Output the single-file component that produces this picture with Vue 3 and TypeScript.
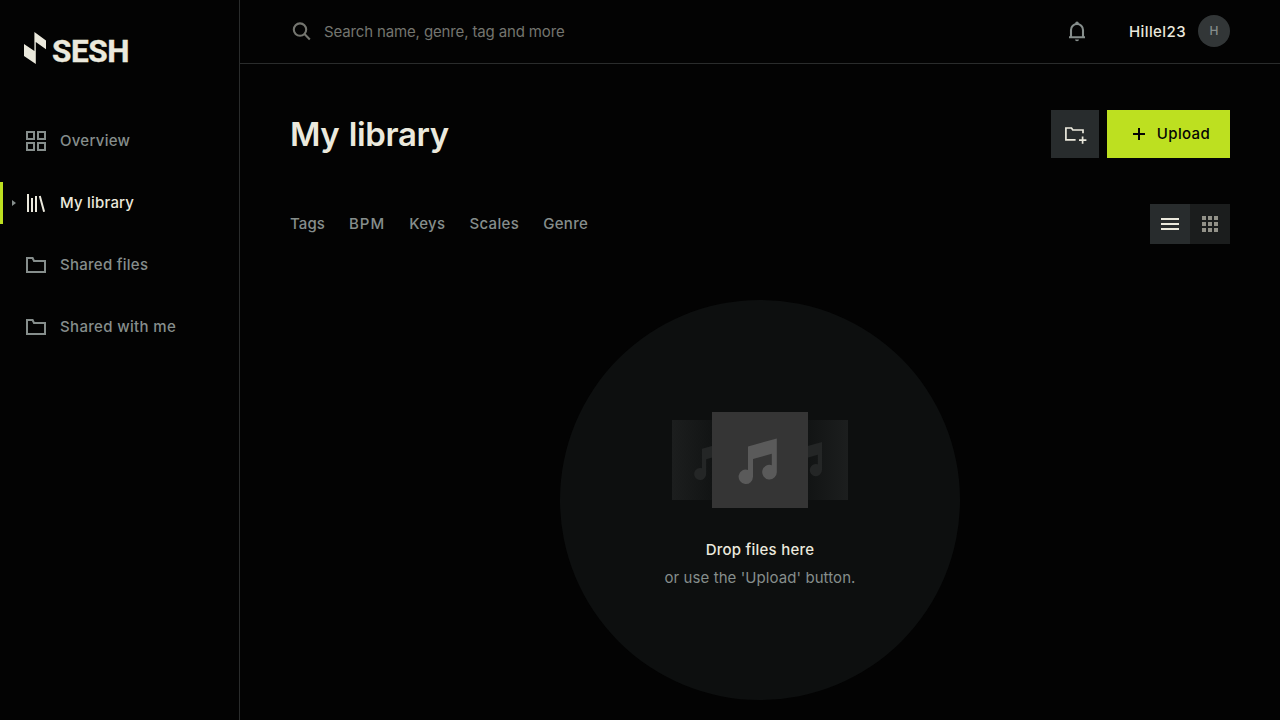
<script setup lang="ts">
interface NavItem { label: string; icon: 'grid' | 'library' | 'folder'; key: string; active?: boolean }

const navItems: NavItem[] = [
  { label: 'Overview', icon: 'grid', key: 'overview' },
  { label: 'My library', icon: 'library', key: 'library', active: true },
  { label: 'Shared files', icon: 'folder', key: 'files' },
  { label: 'Shared with me', icon: 'folder', key: 'with-me' },
]
const filters: string[] = ['Tags', 'BPM', 'Keys', 'Scales', 'Genre']
const notePath =
  'M12 10.4 40.8 2.4V36.1a7.3 7.3 0 1 1-5-6.9V17.8L17 23V40.8a7.2 7.2 0 1 1-5-6.9Z'
</script>

<template>
  <div class="app">
    <aside class="sidebar">
      <a class="logo" aria-label="SESH">
        <svg class="mark" width="22" height="32" viewBox="0 0 22 32">
          <path d="M0 12 10.4 19V0L22 8.4V17.2L11.8 10V32L0 24Z" />
        </svg>
        <span class="wordmark">SESH</span>
      </a>
      <nav>
        <a v-for="item in navItems" :key="item.key" class="nav-item" :class="{ active: item.active }">
          <svg v-if="item.active" class="caret" width="4" height="6" viewBox="0 0 4 6"><path d="M0 0 4 3 0 6Z" /></svg>
          <svg v-if="item.icon === 'grid'" class="icon" width="24" height="24" viewBox="0 0 24 24">
            <path class="stroke" d="M3 3h7v7H3ZM14 3h7v7h-7ZM3 14h7v7H3ZM14 14h7v7h-7Z" />
          </svg>
          <svg v-else-if="item.icon === 'library'" class="icon" width="24" height="24" viewBox="0 0 24 24">
            <path class="stroke" d="M4 3v18M8 7v14M12 5v16M15.8 5l4.3 15.8" />
          </svg>
          <svg v-else class="icon" width="24" height="24" viewBox="0 0 24 24">
            <path class="stroke" d="M3 5h5.6L10 8H21V19H3Z" />
          </svg>
          <span class="nav-label" :class="item.key">{{ item.label }}</span>
        </a>
      </nav>
    </aside>

    <div class="page">
      <header class="topbar">
        <div class="search">
          <svg width="24" height="24" viewBox="0 0 24 24">
            <circle class="stroke" cx="10" cy="9.6" r="6.2" /><path class="stroke" d="m14.5 14.1 5.3 5.3" />
          </svg>
          <span class="placeholder">Search name, genre, tag and more</span>
        </div>
        <div class="account">
          <svg class="bell" width="24" height="24" viewBox="0 0 24 24">
            <path class="stroke" d="M6 17V10a6 6 0 0 1 12 0v7M4 17.2h16" />
            <path d="M10.2 4.2V3.2a1.8 1.8 0 0 1 3.6 0v1ZM10 19.4h4a2 1.8 0 0 1-4 0Z" />
          </svg>
          <span class="username">Hillel23</span>
          <span class="avatar">H</span>
        </div>
      </header>

      <main>
        <div class="heading">
          <h1>My library</h1>
          <div class="actions">
            <button class="new-folder" aria-label="New folder">
              <svg width="24" height="24" viewBox="0 0 24 24">
                <path class="stroke" d="M12.6 17.8H2.9V6h5.6l1.3 2H20v3.2M19.6 14.4v7.4M16 18.1h7.4" />
              </svg>
            </button>
            <button class="upload">
              <svg width="24" height="24" viewBox="0 0 24 24"><path class="stroke" d="M12 6v12M6 12h12" /></svg>
              <span>Upload</span>
            </button>
          </div>
        </div>

        <div class="toolbar">
          <div class="filters">
            <span v-for="filter in filters" :key="filter" :class="filter.toLowerCase()">{{ filter }}</span>
          </div>
          <div class="view-toggle">
            <button class="selected" aria-label="List view">
              <svg width="18" height="12" viewBox="0 0 18 12"><path d="M0 0h18v2H0ZM0 5h18v2H0ZM0 10h18v2H0Z" /></svg>
            </button>
            <button aria-label="Grid view">
              <svg width="16" height="16" viewBox="0 0 16 16">
                <path d="M0 0h4v4H0ZM6 0h4v4H6ZM12 0h4v4h-4ZM0 6h4v4H0ZM6 6h4v4H6ZM12 6h4v4h-4ZM0 12h4v4H0ZM6 12h4v4H6ZM12 12h4v4h-4Z" />
              </svg>
            </button>
          </div>
        </div>

        <section class="dropzone">
          <div class="covers">
            <div class="cover left"><svg width="40" height="40" viewBox="0 0 48 48"><path :d="notePath" /></svg></div>
            <div class="cover center"><svg width="48" height="48" viewBox="0 0 48 48"><path :d="notePath" /></svg></div>
            <div class="cover right"><svg width="40" height="40" viewBox="0 0 48 48"><path :d="notePath" /></svg></div>
          </div>
          <p class="drop-title">Drop files here</p>
          <p class="drop-hint">or use the 'Upload' button.</p>
        </section>
      </main>
    </div>
  </div>
</template>

<style>
html, body { background: #030303; overflow: hidden; }
</style>

<style scoped>
* { box-sizing: border-box; }
.app {
  display: flex; width: 1280px; height: 720px; overflow: hidden;
  background: #030303; color: #868e8c;
  font: 500 15px/24px Inter, "Liberation Sans", sans-serif; letter-spacing: 0.5px;
}
svg { display: block; flex: none; fill: currentColor; }
.stroke { fill: none; stroke: currentColor; stroke-width: 2; }
button { border: 0; padding: 0; font: inherit; letter-spacing: inherit; color: inherit; display: flex; align-items: center; justify-content: center; }

.sidebar { width: 240px; flex: none; border-right: 1px solid #2a2c2c; }
.logo { display: flex; height: 120px; padding: 32px 0 0 24px; color: #ebe9dd; }
.wordmark { margin: 4px 0 0 6px; font: 700 31.5px/32px Roboto, "Liberation Sans", sans-serif; letter-spacing: -0.4px; -webkit-text-stroke: 0.4px currentColor; }
.nav-item { position: relative; display: flex; align-items: center; height: 42px; margin-bottom: 20px; padding-left: 24px; border-left: 0 solid #bde020; }
.nav-item.active { border-left-width: 3px; padding-left: 21px; color: #ebe9dd; }
.nav-label { margin-left: 12px; white-space: nowrap; letter-spacing: 0.27px; }
.nav-label.library { letter-spacing: 0.2px; }
.nav-label.with-me { letter-spacing: 0.34px; }
.caret { position: absolute; left: 9px; top: 18px; color: #868e8c; }

.page { flex: 1; min-width: 0; }
.topbar { height: 64px; border-bottom: 1px solid #2a2c2c; padding: 0 50px; display: flex; align-items: center; justify-content: space-between; }
.search { display: flex; align-items: center; gap: 10px; color: #74756f; font-weight: 400; letter-spacing: -0.14px; }
.search .stroke, .bell .stroke { stroke-width: 2.1; }
.account { display: flex; align-items: center; color: #ebe9dd; }
.bell { color: #868e8c; margin-right: 40px; }
.username { margin-right: 12px; letter-spacing: 0.42px; }
.avatar { width: 32px; height: 32px; margin-bottom: 1px; border-radius: 50%; background: #323637; color: #868e8c; font-size: 12px; line-height: 32px; text-align: center; letter-spacing: 0; }

main { padding: 46px 50px 0; }
.heading { height: 48px; display: flex; align-items: center; justify-content: space-between; }
h1 { margin: 0; font: 600 33px/48px Inter, "Liberation Sans", sans-serif; color: #ebe9dd; letter-spacing: -0.4px; word-spacing: 1.6px; }
.actions { display: flex; gap: 8px; }
.new-folder { width: 48px; height: 48px; background: #282c2d; color: #ebe9dd; }
.new-folder .stroke { stroke-width: 1.7; }
.upload { width: 123px; height: 48px; gap: 6px; background: #bde020; color: #050505; letter-spacing: 0.35px; }
.toolbar { margin-top: 46px; height: 40px; display: flex; align-items: center; justify-content: space-between; }
.filters { display: flex; gap: 24px; letter-spacing: 0.33px; }
.filters .tags { letter-spacing: 0.1px; }
.filters .bpm { letter-spacing: 1px; }
.view-toggle { display: flex; }
.view-toggle button { width: 40px; height: 40px; background: #1b1d1d; color: #929188; }
.view-toggle .selected { background: #282c2d; color: #ebe9dd; }

.dropzone { width: 400px; height: 400px; margin: 56px auto 0; padding-top: 112px; border-radius: 50%; background: #0d0f0f; text-align: center; }
.covers { height: 96px; display: flex; align-items: center; justify-content: center; }
.cover { display: flex; align-items: center; justify-content: center; width: 80px; height: 80px; color: #242626; }
.left { margin-right: -40px; background: linear-gradient(90deg, #1c1e1e, #101212 60%); }
.right { margin-left: -40px; background: linear-gradient(270deg, #1c1e1e, #101212 60%); }
.center { position: relative; width: 96px; height: 96px; background: #353535; color: #5a5a5a; }
p { margin: 0; }
.drop-title { margin-top: 30px; color: #ebe9dd; letter-spacing: 0.23px; }
.drop-hint { margin-top: 4px; font-weight: 400; letter-spacing: 0.08px; }
</style>
